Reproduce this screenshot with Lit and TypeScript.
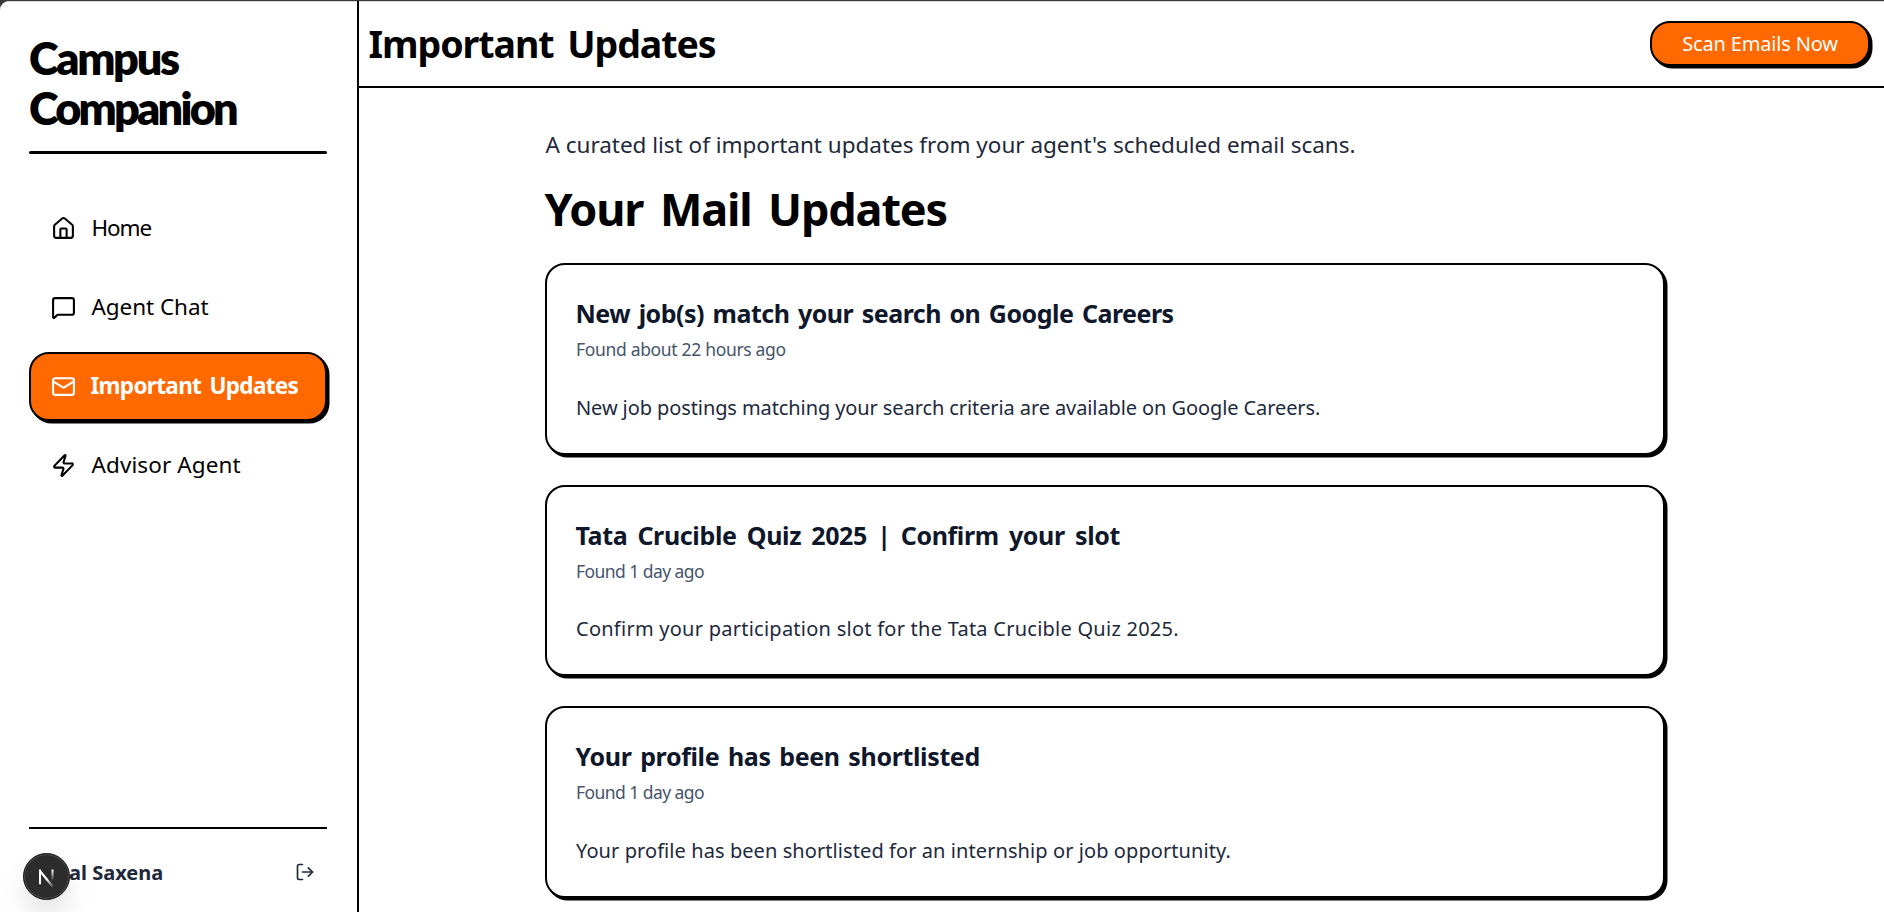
import { LitElement, html, css, svg } from "lit";
import { classMap } from "lit/directives/class-map.js";
import { styleMap } from "lit/directives/style-map.js";

const icons = {
  home: svg`<path d="M15 21v-8a1 1 0 0 0-1-1h-4a1 1 0 0 0-1 1v8"/><path d="M3 10a2 2 0 0 1 .709-1.528l7-5.999a2 2 0 0 1 2.582 0l7 5.999A2 2 0 0 1 21 10v9a2 2 0 0 1-2 2H5a2 2 0 0 1-2-2z"/>`,
  chat: svg`<path d="M22 17a2 2 0 0 1-2 2H6.828a2 2 0 0 0-1.414.586l-2.202 2.202A.71.71 0 0 1 2 21.286V5a2 2 0 0 1 2-2h16a2 2 0 0 1 2 2z"/>`,
  mail: svg`<rect width="20" height="16" x="2" y="4" rx="2"/><path d="m22 7-8.97 5.7a1.94 1.94 0 0 1-2.06 0L2 7"/>`,
  zap: svg`<path d="M4 14a1 1 0 0 1-.78-1.63l9.9-10.2a.5.5 0 0 1 .86.46l-1.92 6.02A1 1 0 0 0 13 10h7a1 1 0 0 1 .78 1.63l-9.9 10.2a.5.5 0 0 1-.86-.46l1.92-6.02A1 1 0 0 0 11 14z"/>`,
  logout: svg`<path d="m16 17 5-5-5-5"/><path d="M21 12H9"/><path d="M9 21H5a2 2 0 0 1-2-2V5a2 2 0 0 1 2-2h4"/>`,
};

const icon = (name: keyof typeof icons, size: number) => html`<svg
  width=${size} height=${size} viewBox="0 0 24 24" fill="none" stroke="currentColor"
  stroke-width="2" stroke-linecap="round" stroke-linejoin="round">${icons[name]}</svg>`;

const track = (px: number, word = 0) => styleMap({ letterSpacing: `${px}px`, wordSpacing: `${word}px` });

const nav = [
  { icon: "home", label: "Home", ls: -1.1, ws: 0, active: false },
  { icon: "chat", label: "Agent Chat", ls: -0.06, ws: 0, active: false },
  { icon: "mail", label: "Important Updates", ls: -0.66, ws: 3, active: true },
  { icon: "zap", label: "Advisor Agent", ls: 0.1, ws: 0, active: false },
] as const;

const updates = [
  {
    title: "New job(s) match your search on Google Careers", tls: -0.5, tws: 2.5,
    found: "Found about 22 hours ago", fls: -0.326,
    text: "New job postings matching your search criteria are available on Google Careers.", xls: -0.095,
  },
  {
    title: "Tata Crucible Quiz 2025 | Confirm your slot", tls: -0.36, tws: 4,
    found: "Found 1 day ago", fls: -0.558,
    text: "Confirm your participation slot for the Tata Crucible Quiz 2025.", xls: 0.25,
  },
  {
    title: "Your profile has been shortlisted", tls: -0.36, tws: 2.5,
    found: "Found 1 day ago", fls: -0.558,
    text: "Your profile has been shortlisted for an internship or job opportunity.", xls: 0.079,
  },
];

class AppRoot extends LitElement {
  static styles = css`
    :host { display: block; height: 912px; background: #3a383a; overflow: hidden; position: relative;
      font-family: "Noto Sans", sans-serif; color: #000; box-sizing: border-box; padding-top: 1px; }
    * { box-sizing: border-box; }
    h1, h2, h3, p { margin: 0; white-space: nowrap; }
    svg { display: block; flex: none; }
    .page { display: flex; height: 911px; background: #fff; border-top-left-radius: 9px; box-shadow: inset 0 1px #d8d6d8; }
    .side { width: 359px; flex: none; border-right: 2px solid #000; padding: 31.5px 30px 0 29px; display: flex; flex-direction: column; }
    .brand { font: 800 45px/50px Lato, sans-serif; padding-bottom: 18.5px; }
    .rule { height: 3px; border-radius: 2px; background: #000; margin-bottom: 39.5px; }
    nav { display: flex; flex-direction: column; gap: 10px; }
    .item { height: 69px; border: 2px solid transparent; border-radius: 20px; display: flex; align-items: center;
      padding-left: 20px; gap: 15.5px; font-size: 22.5px; white-space: nowrap; }
    .item span { padding-bottom: 1px; }
    .active { background: #ff6900; color: #fff; border-color: #000; box-shadow: 2.5px 2.5px #000; font-weight: 700; gap: 14.5px; }
    .user { margin-top: auto; height: 85px; border-top: 2px solid #000; display: flex; justify-content: space-between;
      padding: 29px 12px 0 40px; color: #1e293b; font-size: 20px; line-height: 30px; font-weight: 700; }
    .user svg { margin-top: 4px; }
    .main { flex: 1; min-width: 0; }
    .top { height: 87px; border-bottom: 2px solid #000; display: flex; align-items: center; justify-content: space-between;
      padding: 0 14px 0 9.5px; }
    .top h1 { font-size: 37.5px; line-height: 45px; word-spacing: 5px; letter-spacing: -1.05px; }
    .scan { font: 400 20px/30px "Noto Sans", sans-serif; letter-spacing: -.17px; color: #fff; background: #ff6900; width: 220px; height: 45px;
      border: 2px solid #000; border-radius: 20px; box-shadow: 2.5px 2.5px #000; padding: 1px 0 0; }
    .content { padding: 39px 33px 0 0; }
    .column { width: 1120px; margin: 0 auto; }
    .intro { font-size: 22.5px; line-height: 35px; color: #1e293b; letter-spacing: -.013px; padding-left: .5px; }
    .column h2 { font-size: 45px; line-height: 50px; margin: 22px 0 29px -.5px; word-spacing: 6px; letter-spacing: -1.145px; }
    .list { display: grid; gap: 30px; }
    .card { height: 191.6px; border: 2px solid #000; border-radius: 20px; box-shadow: 2.5px 2.5px #000; background: #fff; padding: 31px 29px 0; }
    .card h3 { font-size: 25px; line-height: 35px; color: #0f172b; margin-left: -.5px; }
    .found { font-size: 17.5px; line-height: 25px; color: #45556c; padding-top: 6px; }
    .text { font-size: 20px; line-height: 32px; color: #1d293d; padding-top: 29.5px; }
    .badge { position: absolute; left: 23px; top: 853px; width: 47px; height: 47px; border-radius: 50%; background: #2c2c2c;
      border: 1px solid #141414; box-shadow: inset 0 0 0 1px #4c4c4c, 0 16px 32px -8px rgba(0,0,0,.24); }
    .badge svg { margin: -1px; }
  `;

  render() {
    return html`
      <div class="page">
        <aside class="side">
          <h1 class="brand">
            <div style=${track(-2.32)}>Campus</div>
            <div style=${track(-2.8)}>Companion</div>
          </h1>
          <div class="rule"></div>
          <nav>
            ${nav.map((n) => html`<a class=${classMap({ item: true, active: n.active })}>
              ${icon(n.icon, 25)}<span style=${track(n.ls, n.ws)}>${n.label}</span></a>`)}
          </nav>
          <div class="user"><span>al Saxena</span>${icon("logout", 20)}</div>
        </aside>
        <main class="main">
          <header class="top">
            <h1>Important Updates</h1>
            <button class="scan">Scan Emails Now</button>
          </header>
          <section class="content">
            <div class="column">
              <p class="intro">A curated list of important updates from your agent's scheduled email scans.</p>
              <h2>Your Mail Updates</h2>
              <div class="list">
                ${updates.map((u) => html`<article class="card">
                  <h3 style=${track(u.tls, u.tws)}>${u.title}</h3>
                  <p class="found" style=${track(u.fls)}>${u.found}</p>
                  <p class="text" style=${track(u.xls)}>${u.text}</p>
                </article>`)}
              </div>
            </div>
          </section>
        </main>
      </div>
      <div class="badge">
        <svg width="47" height="47" viewBox="0 0 47 47" fill="none">
          <defs>
            <linearGradient id="d" gradientUnits="userSpaceOnUse" x1="24" y1="26" x2="31" y2="35">
              <stop stop-color="#fff"/><stop offset="1" stop-color="#fff" stop-opacity="0"/>
            </linearGradient>
            <linearGradient id="v" gradientUnits="userSpaceOnUse" x1="0" y1="17" x2="0" y2="28">
              <stop stop-color="#fff"/><stop offset="1" stop-color="#fff" stop-opacity="0"/>
            </linearGradient>
          </defs>
          <path d="M17 18L30 34" stroke="url(#d)" stroke-width="2.2"/>
          <path d="M17 31.2V16.5" stroke="#fff" stroke-width="2"/>
          <path d="M29.5 16.5V29" stroke="url(#v)" stroke-width="2"/>
        </svg>
      </div>`;
  }
}
customElements.define("app-root", AppRoot);
